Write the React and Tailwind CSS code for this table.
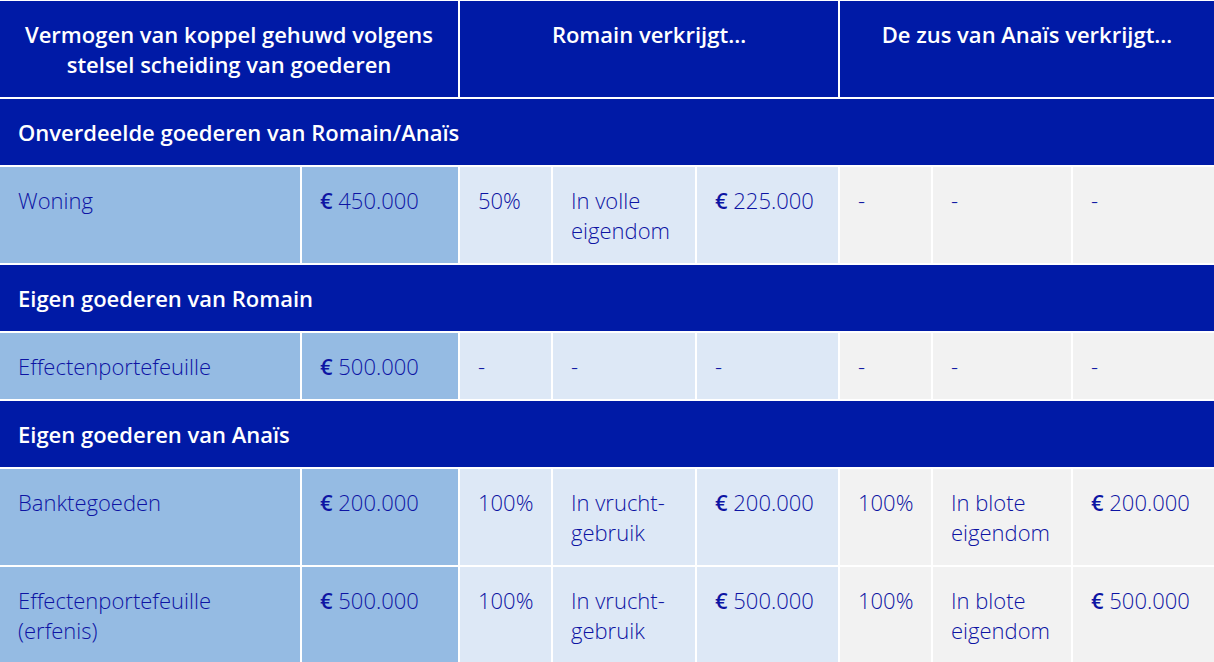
import React from "react";

const C1 = "bg-[#95bbe3]";
const C2 = "bg-[#dde8f6]";
const C3 = "bg-[#f2f2f2]";

function Cell({ bg, children }) {
  return (
    <div className={`${bg} px-[18px] py-[18px] text-[22px] leading-[30px] font-light text-[#0d14a3]`}>
      {children}
    </div>
  );
}

function Section({ children }) {
  return (
    <div className="col-span-8 bg-[#001aa6] px-[18px] py-[18px] text-[22px] leading-[30px] font-semibold text-white">
      {children}
    </div>
  );
}

function Eur({ v }) {
  return (
    <>
      <span className="font-semibold">€</span> {v}
    </>
  );
}

function Row({ cells }) {
  const bgs = [C1, C1, C2, C2, C2, C3, C3, C3];
  return cells.map((c, i) => (
    <Cell key={i} bg={bgs[i]}>
      {c}
    </Cell>
  ));
}

export default function App() {
  return (
    <div
      className="w-[1214px] h-[662px] overflow-hidden bg-white pt-px"
      style={{ fontFamily: '"Open Sans", "Noto Sans", sans-serif' }}
    >
      <div className="grid grid-cols-[300px_156px_91px_142px_141px_91px_138px_141px] gap-[2px]">
        <div className="col-span-2 bg-[#001aa6] px-[10px] py-[18px] text-center text-[22px] leading-[30px] font-semibold text-white">
          Vermogen van koppel gehuwd volgens
          <br />
          stelsel scheiding van goederen
        </div>
        <div className="col-span-3 bg-[#001aa6] px-[18px] py-[18px] text-center text-[22px] leading-[30px] font-semibold text-white">
          Romain verkrijgt…
        </div>
        <div className="col-span-3 bg-[#001aa6] px-[18px] py-[18px] text-center text-[22px] leading-[30px] font-semibold text-white">
          De zus van Anaïs verkrijgt…
        </div>

        <Section>Onverdeelde goederen van Romain/Anaïs</Section>
        <Row
          cells={[
            "Woning",
            <Eur v="450.000" />,
            "50%",
            <>In volle<br />eigendom</>,
            <Eur v="225.000" />,
            "-",
            "-",
            "-",
          ]}
        />

        <Section>Eigen goederen van Romain</Section>
        <Row cells={["Effectenportefeuille", <Eur v="500.000" />, "-", "-", "-", "-", "-", "-"]} />

        <Section>Eigen goederen van Anaïs</Section>
        <Row
          cells={[
            "Banktegoeden",
            <Eur v="200.000" />,
            "100%",
            <>In vrucht-<br />gebruik</>,
            <Eur v="200.000" />,
            "100%",
            <>In blote<br />eigendom</>,
            <Eur v="200.000" />,
          ]}
        />
        <Row
          cells={[
            <>Effectenportefeuille<br />(erfenis)</>,
            <Eur v="500.000" />,
            "100%",
            <>In vrucht-<br />gebruik</>,
            <Eur v="500.000" />,
            "100%",
            <>In blote<br />eigendom</>,
            <Eur v="500.000" />,
          ]}
        />
      </div>
    </div>
  );
}
